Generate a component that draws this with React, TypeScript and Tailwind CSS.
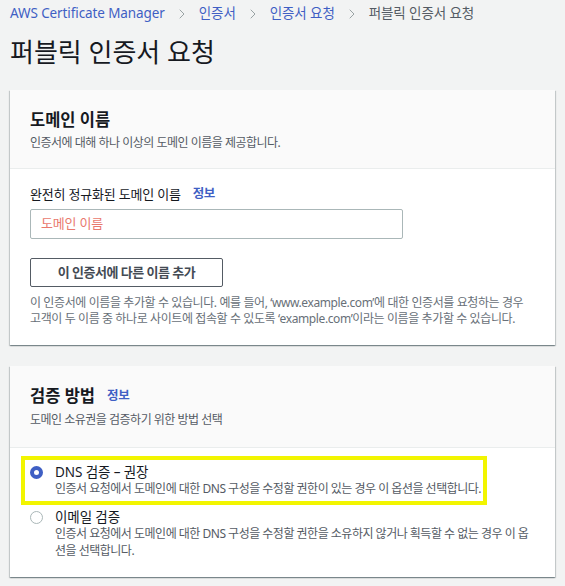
import { ChevronRight } from "lucide-react";

const font = "font-['Noto_Sans','Noto_Sans_CJK_KR',sans-serif]";

const Crumbs = () => (
  <nav className="flex items-center gap-[9px] pt-[4px] text-[13.5px] leading-[19px] tracking-[-0.1px]">
    <a className="text-[#3f5fc4]">AWS Certificate Manager</a>
    <ChevronRight className="h-[16px] w-[16px] text-[#9aa3a4]" strokeWidth={1.5} />
    <a className="text-[#3f5fc4]">인증서</a>
    <ChevronRight className="h-[16px] w-[16px] text-[#9aa3a4]" strokeWidth={1.5} />
    <a className="text-[#3f5fc4]">인증서 요청</a>
    <ChevronRight className="h-[16px] w-[16px] text-[#9aa3a4]" strokeWidth={1.5} />
    <span className="text-[#545b64]">퍼블릭 인증서 요청</span>
  </nav>
);

const Info = () => (
  <span className="ml-[12px] text-[12.5px] font-bold tracking-[-0.3px] text-[#3f5fc4]">정보</span>
);

const Card = ({ children }: { children: React.ReactNode }) => (
  <section className="bg-white shadow-[0_1px_1px_0_rgba(0,28,36,0.3),1px_1px_1px_0_rgba(0,28,36,0.15),-1px_1px_1px_0_rgba(0,28,36,0.15)]">
    {children}
  </section>
);

const Radio = ({ checked }: { checked?: boolean }) =>
  checked ? (
    <span className="mt-[3px] box-border h-[13px] w-[13px] shrink-0 rounded-full border-[4px] border-[#3f5fc4] bg-white" />
  ) : (
    <span className="mt-[3px] box-border h-[13px] w-[13px] shrink-0 rounded-full border border-[#aab7b8] bg-white" />
  );

export default function App() {
  return (
    <div className={`${font} min-h-screen bg-[#f2f3f3] px-[10px] pb-[10px]`}>
      <Crumbs />
      <h1 className="mt-[13px] text-[26px] leading-[32px] text-[#16191f]">퍼블릭 인증서 요청</h1>

      {/* 도메인 이름 */}
      <div className="mt-[22px]">
        <Card>
          <div className="border-b border-[#eaeded] bg-[#fafafa] px-[20px] pt-[19px] pb-[17px]">
            <h2 className="text-[16.5px] font-bold leading-[22px] text-[#16191f]">도메인 이름</h2>
            <p className="mt-[4px] text-[12px] leading-[16px] tracking-[-0.5px] text-[#545b64]">
              인증서에 대해 하나 이상의 도메인 이름을 제공합니다.
            </p>
          </div>
          <div className="px-[20px] pt-[16px] pb-[18px]">
            <label className="flex items-center text-[13px] leading-[18px] tracking-[-0.2px] text-[#16191f]">
              완전히 정규화된 도메인 이름
              <Info />
            </label>
            <div className="mt-[6px] flex h-[30px] w-[373px] items-center rounded-[2px] border border-[#aab7b8] px-[10px] text-[13px] tracking-[-0.2px] text-[#e9786d]">
              도메인 이름
            </div>
            <button className="mt-[19px] h-[29px] w-[193px] rounded-[2px] border border-[#545b64] bg-white text-[13px] font-bold tracking-[-0.5px] text-[#444b54]">
              이 인증서에 다른 이름 추가
            </button>
            <p className="mt-[8px] w-[500px] text-[12px] leading-[16px] tracking-[-0.4px] text-[#687078]">
              이 인증서에 이름을 추가할 수 있습니다. 예를 들어, ‘www.example.com’에 대한 인증서를 요청하는 경우
              고객이 두 이름 중 하나로 사이트에 접속할 수 있도록 ‘example.com’이라는 이름을 추가할 수 있습니다.
            </p>
          </div>
        </Card>
      </div>

      {/* 검증 방법 */}
      <div className="mt-[21px]">
        <Card>
          <div className="border-b border-[#eaeded] bg-[#fafafa] px-[20px] pt-[19px] pb-[19px]">
            <h2 className="flex items-center text-[16.5px] font-bold leading-[22px] text-[#16191f]">
              검증 방법
              <Info />
            </h2>
            <p className="mt-[5px] text-[12px] leading-[16px] tracking-[-0.5px] text-[#545b64]">
              도메인 소유권을 검증하기 위한 방법 선택
            </p>
          </div>
          <div className="relative flex flex-col gap-[11px] px-[20px] pt-[15px] pb-[18px]">
            <div className="pointer-events-none absolute top-[8px] left-[11px] h-[49px] w-[466px] border-[4px] border-[#f2f500]" />
            <div className="flex gap-[12px]">
              <Radio checked />
              <div>
                <div className="text-[13.5px] leading-[18px] tracking-[-0.1px] text-[#16191f]">DNS 검증 – 권장</div>
                <div className="text-[12px] leading-[16px] tracking-[-0.5px] text-[#545b64]">
                  인증서 요청에서 도메인에 대한 DNS 구성을 수정할 권한이 있는 경우 이 옵션을 선택합니다.
                </div>
              </div>
            </div>
            <div className="flex gap-[12px]">
              <Radio />
              <div>
                <div className="text-[13.5px] leading-[18px] tracking-[-0.1px] text-[#16191f]">이메일 검증</div>
                <div className="text-[12px] leading-[16.5px] tracking-[-0.5px] text-[#545b64]">
                  인증서 요청에서 도메인에 대한 DNS 구성을 수정할 권한을 소유하지 않거나 획득할 수 없는 경우 이 옵션을 선택합니다.
                </div>
              </div>
            </div>
          </div>
        </Card>
      </div>
    </div>
  );
}
